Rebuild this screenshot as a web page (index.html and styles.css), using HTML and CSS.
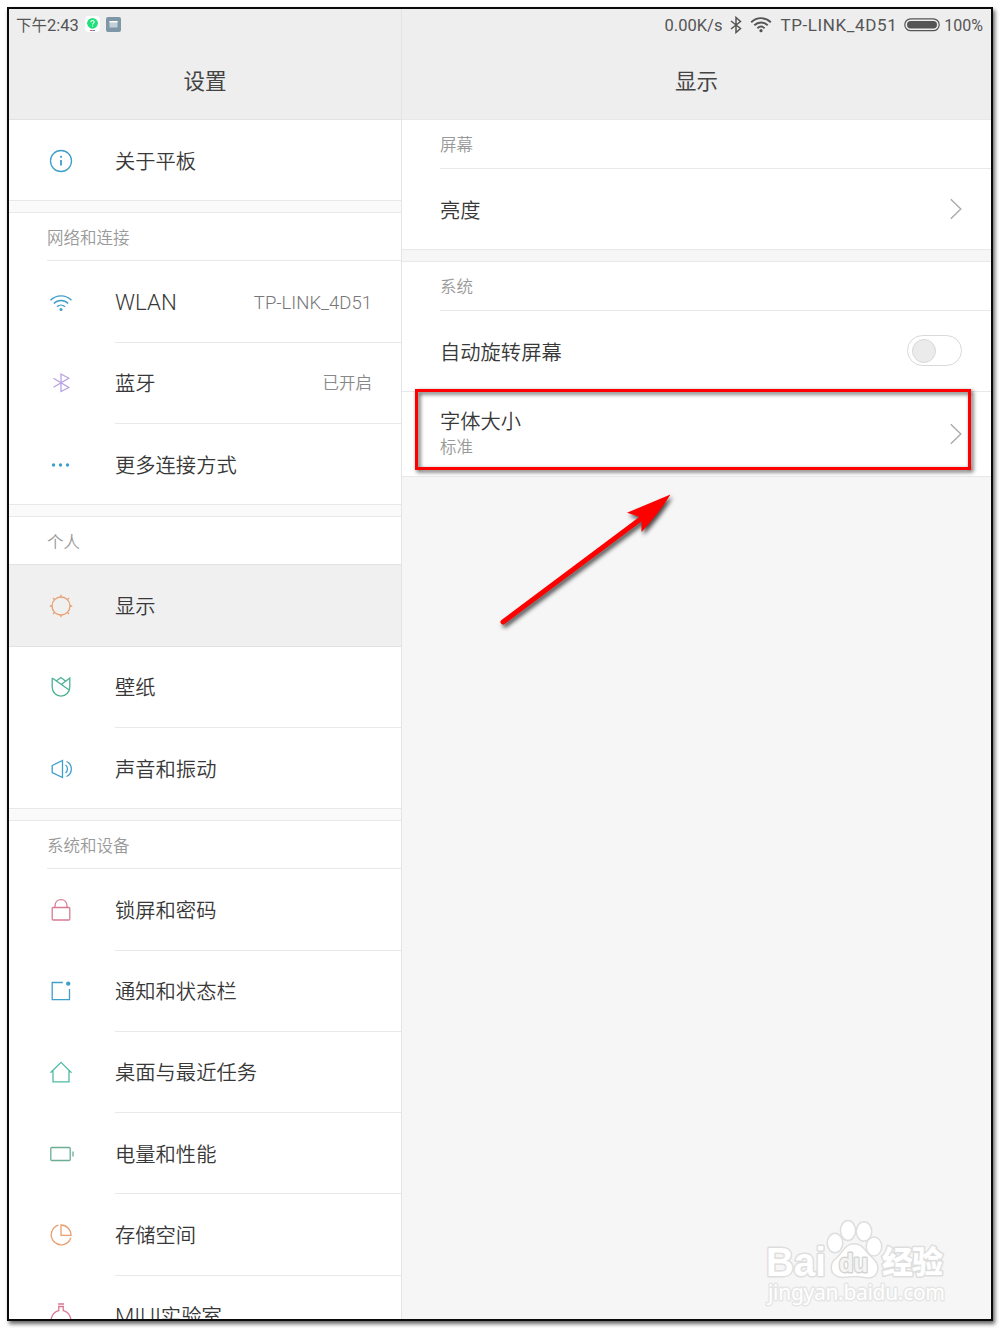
FILE: index.html
```html
<!DOCTYPE html>
<html lang="zh-CN">
  <head>
    <meta charset="utf-8">
    <title>设置</title>
    <meta name="viewport" content="width=device-width, initial-scale=1">
    <link rel="stylesheet" href="styles.css">
  </head>
  <body>
  <div class="tablet">
    <div class="pane side">
      <div class="head">
        <div class="status">
          <span class="time">下午<b>2:43</b></span>
          <svg class="app" width="15" height="16" viewBox="0 0 15 16">
            <rect width="15" height="16" rx="4" fill="#fff"/>
            <circle cx="7.5" cy="7.3" r="5.4" fill="#1fe07a"/>
            <path d="M5.9 6.2c0-2.200 3.300-2.200 3.300-.2 0 1.200-1.600 1.200-1.600 2.600M7.600 9.600v.8" fill="none" stroke="#fff" stroke-width="1.100"/>
            <path d="M5 14.500h2.500" stroke="#e8604c"/>
            <path d="M7.500 14.500H10" stroke="#4c7be8"/>
          </svg>
          <svg class="app" width="15" height="15" viewBox="0 0 15 15">
            <rect width="15" height="15" rx="2" fill="#7e97a6"/>
            <rect x="3.500" y="4" width="8" height="6.500" fill="#c3d0d8"/>
            <path d="M3.500 4.700h8" stroke="#fff" stroke-width="1.400"/>
          </svg>
        </div>
        <h1>设置</h1>
      </div>
      <div class="row top">
        <svg class="icon blue" viewBox="0 0 24 24"><circle cx="12" cy="12" r="10.500"/><path d="M12 11v5.500" stroke-width="1.800"/><circle class="fill" cx="12" cy="7.800" r="1.100"/></svg>
        <div class="body"><span>关于平板</span></div>
      </div>

      <div class="gap"></div>
      <h2>网络和连接</h2>
      <div class="row first">
        <svg class="icon blue" viewBox="0 0 24 24"><path d="M1.500 9.200C7.300 3.300 16.700 3.300 22.500 9.200M4.800 12.500c4-4 10.400-4 14.400 0M8 15.700c2.300-2.200 5.700-2.200 8 0"/><circle class="fill" cx="12" cy="18.500" r="1.500"/></svg>
        <div class="body"><span><b>WLAN</b></span><em class="latin">TP-LINK_4D51</em></div>
      </div>
      <div class="row">
        <svg class="icon purple" viewBox="0 0 24 24"><path d="M4.500 7.200 19.800 16.500 12 20.500V3L19.800 7.200 4.500 16.300"/></svg>
        <div class="body"><span>蓝牙</span><em>已开启</em></div>
      </div>
      <div class="row">
        <svg class="icon blue" viewBox="0 0 24 24"><g class="fill"><circle cx="4.500" cy="12" r="1.700"/><circle cx="11.500" cy="12" r="1.700"/><circle cx="18.500" cy="12" r="1.700"/></g></svg>
        <div class="body"><span>更多连接方式</span></div>
      </div>

      <div class="gap"></div>
      <h2>个人</h2>
      <div class="row active">
        <svg class="icon orange" viewBox="0 0 24 24"><circle cx="12" cy="12" r="9"/><path d="M12 .8v2.400M12 20.800v2.400M.8 12h2.400M20.800 12h2.400M4 4l1.700 1.700M18.300 18.300l1.700 1.700M20 4l-1.700 1.700M5.700 18.300 4 20"/></svg>
        <div class="body"><span>显示</span></div>
      </div>
      <div class="row top">
        <svg class="icon green" viewBox="0 0 24 24"><path d="M3.200 3v9.300a8.800 8.800 0 0 0 17.600 0V3L12.300 9.500M3.200 3 20.500 15.300M7.500 5.800 12 2.500l4.500 3.500"/></svg>
        <div class="body"><span>壁纸</span></div>
      </div>
      <div class="row">
        <svg class="icon blue" viewBox="0 0 24 24"><path d="M3.200 8.500 13.500 3.500v17L3.200 15.500zM16.500 8c2.600 1.600 2.600 6.400 0 8M17.500 4.500c6.400 2.800 6.400 12.200 0 15"/></svg>
        <div class="body"><span>声音和振动</span></div>
      </div>

      <div class="gap"></div>
      <h2>系统和设备</h2>
      <div class="row first">
        <svg class="icon pink" viewBox="0 0 24 24"><rect x="3.200" y="9.500" width="17.600" height="12.500" rx="1"/><path d="M6 9.500V8c0-8.500 12-8.500 12 0v1.500"/></svg>
        <div class="body"><span>锁屏和密码</span></div>
      </div>
      <div class="row">
        <svg class="icon blue" viewBox="0 0 24 24"><path d="M13.800 3.500H3.200v17.200h17.300V10"/><circle class="fill" cx="19.200" cy="4.600" r="2.200"/></svg>
        <div class="body"><span>通知和状态栏</span></div>
      </div>
      <div class="row">
        <svg class="icon teal" viewBox="0 0 24 24"><path d="M1.500 12.800 12 2.300l10.500 10.500M4 10.800v11h16v-11"/></svg>
        <div class="body"><span>桌面与最近任务</span></div>
      </div>
      <div class="row">
        <svg class="icon sage" viewBox="0 0 24 24"><rect x="1.800" y="5.500" width="19.400" height="13" rx="1"/><path d="M24 9.500v5"/></svg>
        <div class="body"><span>电量和性能</span></div>
      </div>
      <div class="row">
        <svg class="icon orange" viewBox="0 0 24 24"><path d="M9.500 2.200A10 10 0 1 0 21.800 14.800M12 2v10.300h10C22 6.500 17.500 2 12 2z"/></svg>
        <div class="body"><span>存储空间</span></div>
      </div>
      <div class="row">
        <svg class="icon pink" viewBox="0 0 24 24"><path d="M9 0h6M9 2.500h6M9.800 2.500v4.200a9.800 9.800 0 1 0 4.400 0V2.500"/></svg>
        <div class="body"><span><b>MIUI</b>实验室</span></div>
      </div>
    </div>

    <div class="pane main">
      <div class="head">
        <div class="status right">
          <span class="speed">0.00K/s</span>
          <svg class="bt" width="12" height="18" viewBox="0 0 12 18"><path d="M1 5l9.500 7.500L6 16.500v-15l4.500 4L1 13"/></svg>
          <svg class="wifi" width="22" height="17" viewBox="0 0 22 17"><path d="M1.200 6.200c5.600-5.400 14-5.400 19.600 0M4.300 9.300c3.900-3.700 9.500-3.700 13.400 0M7.400 12.200c2.200-2 5-2 7.200 0"/><circle cx="11" cy="14.700" r="1.600"/></svg>
          <span class="ssid">TP-LINK_4D51</span>
          <svg class="battery" width="36" height="14" viewBox="0 0 36 14"><rect x=".8" y=".8" width="34.400" height="11.900" rx="5.900"/><rect class="level" x="3" y="3" width="30" height="7.500" rx="3.700"/></svg>
          <span class="percent">100%</span>
        </div>
        <h1>显示</h1>
      </div>
      <h2>屏幕</h2>
      <div class="row first">
        <div class="body"><span>亮度</span>
          <svg class="arrow" width="12" height="22" viewBox="0 0 12 22"><path d="M.8 1.200 10.800 11 .8 20.800"/></svg>
        </div>
      </div>
      <div class="gap"></div>
      <h2>系统</h2>
      <div class="row first">
        <div class="body"><span>自动旋转屏幕</span><i class="switch"></i></div>
      </div>
      <div class="row two">
        <div class="body">
          <div><span>字体大小</span><small>标准</small></div>
          <svg class="arrow" width="12" height="22" viewBox="0 0 12 22"><path d="M.8 1.200 10.800 11 .8 20.800"/></svg>
        </div>
      </div>
      <div class="rest"></div>
    </div>
  </div>

  <!-- annotations drawn over the settings screen -->
  <div class="mark"></div>
  <svg class="pointer" width="190" height="150" viewBox="0 0 190 150">
    <path d="M13 132 150 29.500" stroke="#f00" stroke-width="5" stroke-linecap="round"/>
    <path d="M180.500 4.500 137 22.700l11.500 3.800 3 5L151.500 42q17-18 29-37.500z" fill="#f00"/>
  </svg>
  <svg class="logo" width="190" height="96" viewBox="0 0 190 96">
    <g class="brand">
      <text class="bai" x="6" y="60" textLength="60" lengthAdjust="spacingAndGlyphs">Bai</text>
      <ellipse cx="75" cy="27" rx="7" ry="9"/>
      <ellipse cx="88" cy="14.500" rx="6.800" ry="9.200"/>
      <ellipse cx="104" cy="15.500" rx="7" ry="9"/>
      <ellipse cx="114" cy="30.500" rx="7" ry="8.700"/>
      <path d="M94 28.500c8 0 10 6 15 11 5 5 9 8 8 14-1 7-7 9-14 7-6-1-11-1-17 0-8 1-14-2-14-9 0-6 4-8 8-12 4-5 7-11 14-11z"/>
      <text class="du" x="79" y="56" textLength="29" lengthAdjust="spacingAndGlyphs">du</text>
      <text class="jy" x="122" y="57" textLength="61">经验</text>
    </g>
    <text class="url" x="8" y="84" textLength="177">jingyan.baidu.com</text>
  </svg>
  </body>
</html>
```

FILE: styles.css
```css
* {
  box-sizing: border-box;
  margin: 0;
  padding: 0;
}
body {
  height: 1328px;
  padding: 7px;
  background-color: #fff;
  font-family: "Noto Sans CJK SC", sans-serif;
  font-weight: 350;
  color: #383838;
  overflow: hidden;
}
.tablet {
  display: flex;
  width: 986px;
  height: 1314px;
  border: 2px solid #0a0a0a;
  background-color: #fff;
  box-shadow: 2px 3px 4px rgba(0,0,0,0.6);
  overflow: hidden;
}
.pane {
  display: flex;
  flex-direction: column;
}
.pane > * {
  flex-shrink: 0;
}
.side {
  width: 393px;
  border-right: 1px solid #e4e4e4;
}
.main {
  flex: 1;
}
.head {
  height: 110px;
  background-color: #eee;
}
.status {
  display: flex;
  align-items: center;
  height: 32px;
  padding-left: 7px;
  font-size: 15.5px;
  font-weight: 400;
  color: #555;
  white-space: nowrap;
}
.status b {
  font: 400 16.5px/1 Roboto, sans-serif;
}
.status .time {
  width: 69px;
  margin-top: -2px;
}
.status .app {
  margin-right: 6px;
  margin-bottom: 2px;
}
.status.right {
  justify-content: flex-end;
  padding: 0 8px 0 0;
  font-family: Roboto, sans-serif;
}
.status svg {
  flex: none;
}
.speed {
  font-size: 16.5px;
}
.ssid {
  font-size: 17px;
  letter-spacing: 0.6px;
}
.percent {
  font-size: 16px;
}
.bt, .wifi, .battery {
  fill: none;
  stroke: #555;
  stroke-width: 1.5;
}
.bt {
  margin: 0 8px 1px;
}
.wifi {
  margin: 0 8px 2px 0;
}
.wifi circle, .level {
  fill: #555;
  stroke: none;
}
.wifi path {
  stroke-width: 1.9;
}
.battery {
  margin: 0 4px 1px 7px;
  stroke-width: 1.2;
}
h1 {
  height: 78px;
  line-height: 77px;
  text-align: center;
  font-size: 21.5px;
  font-weight: 400;
  color: #444;
}
h2 {
  height: 48.6px;
  line-height: 48px;
  padding-left: 38px;
  font-size: 16.5px;
  font-weight: 350;
  color: #999;
  border-top: 1px solid #e8e8e8;
}
.gap {
  height: 11.6px;
  background-color: #fafafa;
  border-top: 1px solid #e8e8e8;
}
.row {
  display: flex;
  align-items: center;
  height: 81.25px;
  padding-left: 40px;
}
.row.first {
  margin-left: 38px;
  padding-left: 2px;
  border-top: 1px solid #e8e8e8;
}
.row.top, .row.active {
  border-top: 1px solid #e2e2e2;
}
.row.active {
  background-color: #f0f0f0;
}
.body {
  display: flex;
  flex: 1;
  align-items: center;
  justify-content: space-between;
  height: 100%;
  margin-left: 42px;
  padding: 0 29px 1px 0;
  border-top: 1px solid #e8e8e8;
  font-size: 20.3px;
}
.first .body, .top .body, .active .body {
  border-top: 0;
}
.body b {
  font: 300 22.3px/1 Roboto, sans-serif;
}
.body em {
  font-size: 16.5px;
  font-style: normal;
  color: #888;
}
.body .latin {
  margin-top: 4px;
  font: 300 18.5px/1 Roboto, sans-serif;
  color: #777;
}
.icon {
  width: 24px;
  height: 24px;
  margin-top: 2px;
  fill: none;
  stroke: currentColor;
  stroke-width: 1.3;
  overflow: visible;
}
.top .icon, .active .icon {
  margin-top: 1px;
}
.icon .fill {
  fill: currentColor;
  stroke: none;
}
.blue { color: #3f9fcb; }
.purple { color: #b9a3e3; }
.orange { color: #e8a071; }
.green { color: #4bb193; }
.teal { color: #4fbba5; }
.sage { color: #6bae94; }
.pink { color: #d67c92; }

/* right pane */
.main h2 {
  height: 49px;
}
.main .gap {
  height: 12px;
  background-color: #f6f6f6;
}
.main .row {
  height: 81px;
  padding-left: 0;
}
.main .body {
  margin-left: 0;
}
.main .two {
  height: 85px;
  border-top: 1px solid #e8e8e8;
}
.two .body {
  border-top: 0;
  padding-left: 38px;
}
.two span {
  display: block;
  line-height: 26px;
}
.body small {
  display: block;
  line-height: 27px;
  font-size: 16.5px;
  color: #999;
}
.arrow {
  fill: none;
  stroke: #aaa;
  stroke-width: 1.4;
}
.switch {
  width: 55px;
  height: 31px;
  margin-bottom: 1px;
  padding: 3.5px;
  border: 1px solid #d9d9d9;
  border-radius: 16px;
}
.switch::before {
  content: "";
  display: block;
  width: 22px;
  height: 22px;
  border: 1px solid #d9d9d9;
  border-radius: 50%;
  background-color: #ebebeb;
}
.rest {
  flex: 1;
  background-color: #f6f6f6;
  border-top: 1px solid #e8e8e8;
}

/* annotations */
.mark {
  position: absolute;
  left: 415px;
  top: 389px;
  width: 556px;
  height: 81px;
  border: 3px solid #f00;
  filter: drop-shadow(2px 2px 2px rgba(0,0,0,0.7));
}
.pointer {
  position: absolute;
  left: 490px;
  top: 490px;
  filter: drop-shadow(2px 3px 2px rgba(0,0,0,0.7));
}
.logo {
  position: absolute;
  left: 760px;
  top: 1216px;
  fill: #fff;
  stroke: #dedede;
  stroke-width: 3;
  stroke-linejoin: round;
  paint-order: stroke;
}
.bai {
  font: bold 40px "Liberation Sans", sans-serif;
}
.du {
  font: bold 26px "Liberation Sans", sans-serif;
  fill: #f4f4f4;
  stroke: #d4d4d4;
}
.jy {
  font: 900 31px "Noto Sans CJK SC", sans-serif;
}
.url {
  font: 21px "Noto Sans", sans-serif;
  stroke: #e6e6e6;
}
```
